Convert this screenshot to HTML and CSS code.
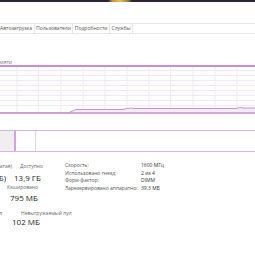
FILE: index.html
```html
<!DOCTYPE html>
<html lang="ru">
<head>
<meta charset="utf-8">
<link rel="stylesheet" href="styles.css">
</head>
<body>
<div class="top"></div>
<div class="tabs">
  <span class="tab">Автозагрузка</span>
  <span class="tab">Пользователи</span>
  <span class="tab">Подробности</span>
  <span class="tab">Службы</span>
</div>
<div class="caption"><span>Использование памяти</span></div>
<div class="graph">
  <svg width="255" height="49" viewBox="0 0 255 49">
    <g stroke="#f3e6f6" stroke-width="1">
      <line x1="0" y1="5.5" x2="255" y2="5.5"/>
      <line x1="0" y1="10.5" x2="255" y2="10.5"/>
      <line x1="0" y1="15.5" x2="255" y2="15.5"/>
      <line x1="0" y1="20.5" x2="255" y2="20.5"/>
      <line x1="0" y1="25.5" x2="255" y2="25.5"/>
      <line x1="0" y1="30.5" x2="255" y2="30.5"/>
      <line x1="0" y1="35.5" x2="255" y2="35.5"/>
      <line x1="0" y1="40.5" x2="255" y2="40.5"/>
      <line x1="17" y1="0" x2="17" y2="49"/>
      <line x1="38.5" y1="0" x2="38.5" y2="49"/>
      <line x1="61" y1="0" x2="61" y2="49"/>
      <line x1="83" y1="0" x2="83" y2="49"/>
      <line x1="105" y1="0" x2="105" y2="49"/>
      <line x1="127" y1="0" x2="127" y2="49"/>
      <line x1="149" y1="0" x2="149" y2="49"/>
      <line x1="170.5" y1="0" x2="170.5" y2="49"/>
      <line x1="193" y1="0" x2="193" y2="49"/>
      <line x1="215" y1="0" x2="215" y2="49"/>
      <line x1="237" y1="0" x2="237" y2="49"/>
    </g>
    <path d="M0 48 L68 48 L76 44.5 L123 44.5 L127 43.5 L131 43 L134 43.5 L236 43.5 L240 42.5 L244 43 L255 43 L255 49 L0 49 Z" fill="#f1edf3"/>
    <path d="M0 48 L68 48 L76 44.5 L123 44.5 L127 43.5 L131 43 L134 43.5 L236 43.5 L240 42.5 L244 43 L255 43" fill="none" stroke="#c990d8" stroke-width="1"/>
    <line x1="0" y1="48" x2="255" y2="48" stroke="#c990d8" stroke-width="1.5"/>
    <line x1="0" y1="1" x2="255" y2="1" stroke="#c78ed7" stroke-width="2"/>
  </svg>
</div>
<div class="comp">
  <div class="seg used"></div>
  <div class="seg mod"></div>
  <div class="seg rest"></div>
</div>
<div class="stats">
  <div class="left">
    <div class="row lbl r1"><span class="c1">Используется (сжатая)</span><span class="c2">Доступно</span></div>
    <div class="row val r2"><span class="c1 v1">5,9 ГБ (0 Б)</span><span class="c2">13,9 ГБ</span></div>
    <div class="row lbl r3"><span class="c1 c1b">Выделено</span><span class="c2 c2b">Кэшировано</span></div>
    <div class="row val r4"><span class="c2 c2c">795 МБ</span></div>
    <div class="row lbl r5"><span class="c1 c1c">Выгружаемый пул</span><span class="c2">Невыгружаемый пул</span></div>
    <div class="row val r6"><span class="c2 c2d">102 МБ</span></div>
  </div>
  <div class="right">
    <div class="names">
      <span>Скорость:</span>
      <span>Использовано гнезд:</span>
      <span>Форм-фактор:</span>
      <span>Зарезервировано аппаратно:</span>
    </div>
    <div class="vals">
      <span>1600 МГц</span>
      <span>2 из 4</span>
      <span>DIMM</span>
      <span>39,3 МБ</span>
    </div>
  </div>
</div>
</body>
</html>
```
FILE: styles.css
```css
html, body {
  margin: 0;
  padding: 0;
  background: #ffffff;
}
body {
  width: 255px;
  height: 255px;
  overflow: hidden;
  font-family: "Open Sans", "Noto Sans", sans-serif;
  color: #333;
}
.top {
  height: 2px;
  background: linear-gradient(90deg, #2b2437 0, #2b2437 108px, #c98a3c 112px, #e8c25a 120px, #9a7a50 128px, #2b2437 132px, #2b2437 100%);
}
.tabs {
  margin-top: 21px;
  height: 9px;
  border-top: 1px solid #e6e6e6;
  border-bottom: 1px solid #e6e6e6;
  display: flex;
  align-items: stretch;
}
.tab {
  font-size: 5px;
  line-height: 9px;
  color: #555;
  padding: 0 1.5px;
  border-right: 1px solid #e6e6e6;
  white-space: nowrap;
}
.tab:first-child {
  margin-left: -1.5px;
}
.caption {
  margin-top: 24px;
  width: 12px;
  height: 7px;
  display: flex;
  justify-content: flex-end;
  align-items: center;
}
.caption span {
  font-size: 5px;
  color: #777;
  white-space: nowrap;
}
.graph {
  height: 49px;
}
.graph svg {
  display: block;
}
.comp {
  margin-top: 16px;
  height: 20px;
  border-top: 1.5px solid #dbb3e4;
  border-bottom: 1.5px solid #dbb3e4;
  display: flex;
}
.seg.used {
  width: 14px;
  background: #f0eef1;
  border-right: 2px solid #d3a3de;
}
.seg.mod {
  width: 19px;
  border-right: 1px solid #e6d0eb;
}
.seg.rest {
  flex: 1;
}
.stats {
  margin-top: 10px;
  display: flex;
}
.left {
  width: 65px;
  display: flex;
  flex-direction: column;
}
.row {
  display: flex;
  align-items: center;
  white-space: nowrap;
}
.row .c1 {
  width: 12px;
  display: flex;
  justify-content: flex-end;
  flex: none;
}
.row .c2 {
  margin-left: 8px;
}
.lbl {
  font-size: 5px;
  color: #666;
}
.val {
  font-size: 8px;
  color: #222;
}
.r1 { height: 8px; }
.r2 { height: 14px; }
.r3 { height: 6px; }
.r4 { height: 14px; }
.r5 { height: 10px; margin-top: 4px; }
.r6 { height: 14px; margin-top: -4px; }
.val .v1 {
  width: 6px;
}
.lbl .c1b {
  width: 0;
  visibility: hidden;
}
.lbl .c2b {
  margin-left: 7px;
}
.val .c2c {
  margin-left: 10px;
}
.lbl .c1c {
  width: 2px;
}
.lbl .c1c + .c2 {
  margin-left: 19px;
}
.val .c2d {
  margin-left: 12px;
}
.right {
  display: flex;
  gap: 10px;
}
.names, .vals {
  display: flex;
  flex-direction: column;
  font-size: 5px;
  line-height: 7.7px;
  color: #555;
  white-space: nowrap;
}
.names {
  width: 66px;
}
.vals {
  color: #333;
}
```
